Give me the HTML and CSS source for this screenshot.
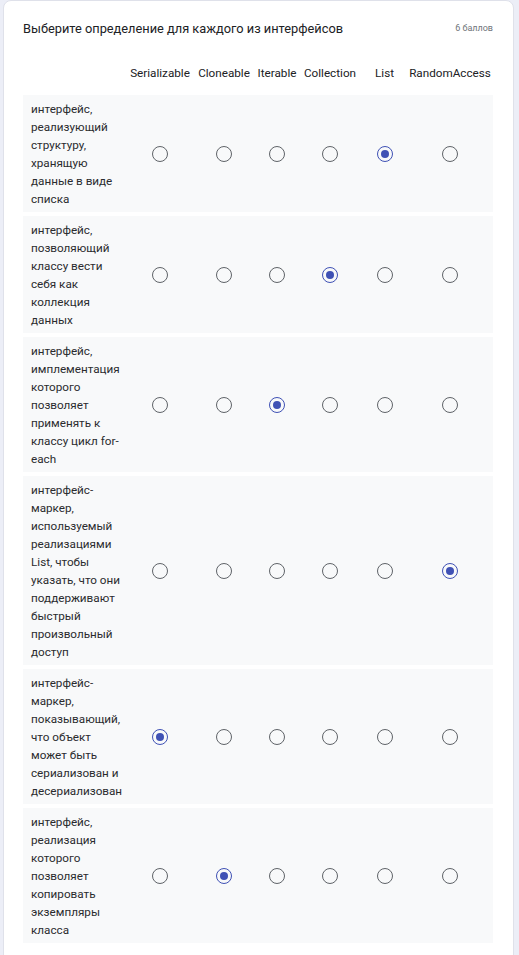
FILE: index.html
```html
<!DOCTYPE html>
<html lang="ru">
<head>
<meta charset="utf-8">
<title>Вопрос</title>
<link rel="stylesheet" href="styles.css">
</head>
<body>
<div class="card">
  <div class="head">
    <div class="title">Выберите определение для каждого из интерфейсов</div>
    <div class="points">6 баллов</div>
  </div>
  <div class="grid">
    <div class="row header">
      <div class="label"></div>
      <div class="col">Serializable</div>
      <div class="col">Cloneable</div>
      <div class="col">Iterable</div>
      <div class="col">Collection</div>
      <div class="col">List</div>
      <div class="col">RandomAccess</div>
    </div>
    <div class="row item">
      <div class="label">интерфейс, реализующий структуру, хранящую данные в виде списка</div>
      <div class="col"><span class="radio"></span></div>
      <div class="col"><span class="radio"></span></div>
      <div class="col"><span class="radio"></span></div>
      <div class="col"><span class="radio"></span></div>
      <div class="col"><span class="radio on"></span></div>
      <div class="col"><span class="radio"></span></div>
    </div>
    <div class="row item">
      <div class="label">интерфейс, позволяющий классу вести себя как коллекция данных</div>
      <div class="col"><span class="radio"></span></div>
      <div class="col"><span class="radio"></span></div>
      <div class="col"><span class="radio"></span></div>
      <div class="col"><span class="radio on"></span></div>
      <div class="col"><span class="radio"></span></div>
      <div class="col"><span class="radio"></span></div>
    </div>
    <div class="row item">
      <div class="label">интерфейс, имплементация которого позволяет применять к классу цикл for-each</div>
      <div class="col"><span class="radio"></span></div>
      <div class="col"><span class="radio"></span></div>
      <div class="col"><span class="radio on"></span></div>
      <div class="col"><span class="radio"></span></div>
      <div class="col"><span class="radio"></span></div>
      <div class="col"><span class="radio"></span></div>
    </div>
    <div class="row item">
      <div class="label">интерфейс-маркер, используемый реализациями List, чтобы указать, что они поддерживают быстрый произвольный доступ</div>
      <div class="col"><span class="radio"></span></div>
      <div class="col"><span class="radio"></span></div>
      <div class="col"><span class="radio"></span></div>
      <div class="col"><span class="radio"></span></div>
      <div class="col"><span class="radio"></span></div>
      <div class="col"><span class="radio on"></span></div>
    </div>
    <div class="row item">
      <div class="label">интерфейс-маркер, показывающий, что объект может быть сериализован и десериализован</div>
      <div class="col"><span class="radio on"></span></div>
      <div class="col"><span class="radio"></span></div>
      <div class="col"><span class="radio"></span></div>
      <div class="col"><span class="radio"></span></div>
      <div class="col"><span class="radio"></span></div>
      <div class="col"><span class="radio"></span></div>
    </div>
    <div class="row item">
      <div class="label">интерфейс, реализация которого позволяет копировать экземпляры класса</div>
      <div class="col"><span class="radio"></span></div>
      <div class="col"><span class="radio on"></span></div>
      <div class="col"><span class="radio"></span></div>
      <div class="col"><span class="radio"></span></div>
      <div class="col"><span class="radio"></span></div>
      <div class="col"><span class="radio"></span></div>
    </div>
  </div>
</div>
</body>
</html>
```

FILE: styles.css
```css
html, body {
  margin: 0;
  padding: 0;
}
body {
  background: #eceef7;
  font-family: Roboto, "Noto Sans", Arial, sans-serif;
  color: #202124;
  height: 955px;
  overflow: hidden;
}
.card {
  margin-left: 3px;
  width: 511px;
  min-height: 1000px;
  background: #fff;
  border: 1px solid #dfe1ea;
  border-radius: 8px;
  box-sizing: border-box;
  padding: 17px 20px 0 19px;
}
.head {
  display: flex;
  justify-content: space-between;
  align-items: center;
  height: 20px;
}
.title {
  font-size: 12.8px;
}
.points {
  font-size: 9px;
  color: #70757a;
}
.grid {
  margin-top: 26px;
  display: flex;
  flex-direction: column;
  gap: 4px;
}
.row {
  display: grid;
  grid-template-columns: 105px 64px 64px 42px 64px 45px 86px;
  align-items: center;
}
.header {
  font-size: 11.7px;
  line-height: 18px;
  padding-bottom: 9px;
}
.header .col {
  text-align: center;
  white-space: nowrap;
}
.item {
  background: #f8f9fa;
  padding: 4.5px 0;
}
.label {
  font-size: 11.7px;
  line-height: 18px;
  padding: 0 1px 0 8px;
  color: #2a2b2e;
}
.col {
  display: flex;
  justify-content: center;
}
.radio {
  width: 16px;
  height: 16px;
  box-sizing: border-box;
  border: 1.5px solid #5f6368;
  border-radius: 50%;
  display: flex;
  align-items: center;
  justify-content: center;
}
.radio.on {
  border-color: #3f51b5;
}
.radio.on::after {
  content: "";
  width: 8px;
  height: 8px;
  border-radius: 50%;
  background: #3f51b5;
}
```
